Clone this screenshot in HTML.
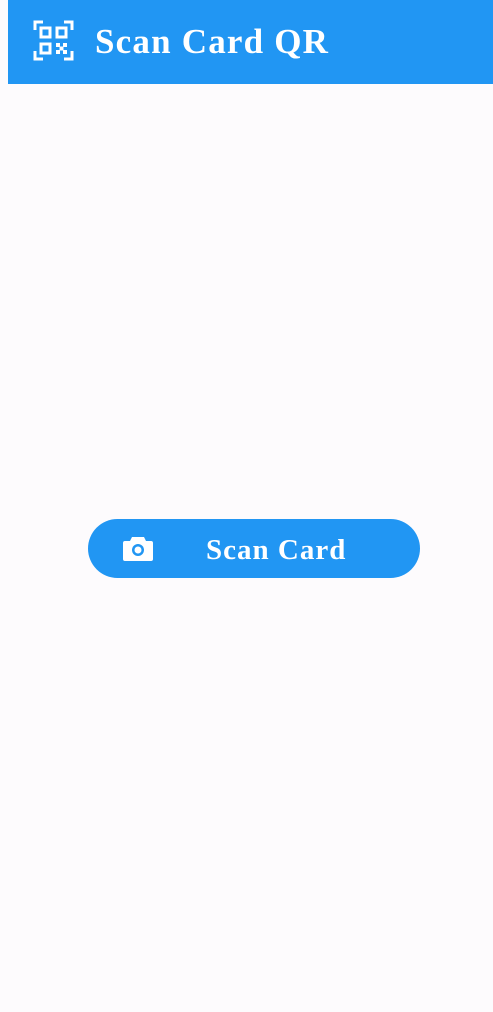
<!DOCTYPE html>
<html><head><style>
html,body{margin:0;padding:0;width:493px;height:1012px;background:#fdfbfd;overflow:hidden}
.hdr{position:absolute;left:8px;top:0;width:485px;height:84px;background:#2196f3}
.t{position:absolute;left:95px;top:22px;font:bold 35px "Liberation Serif",serif;color:#fff;letter-spacing:1.2px}
.btn{position:absolute;left:88px;top:519px;width:332px;height:59px;border-radius:30px;background:#2196f3}
.bt{position:absolute;left:206px;top:534px;font:bold 29px "Liberation Serif",serif;color:#fff;letter-spacing:1px}
</style></head><body>
<div class="hdr"></div>
<svg style="position:absolute;left:33px;top:20px" width="41" height="41" viewBox="0 0 41 41" fill="none" stroke="#fff" stroke-width="3">
<path d="M2 10V2h8M31 2h8v8M39 31v8h-8M10 39H2v-8"/>
<rect x="8" y="8" width="9" height="9"/><rect x="24" y="8" width="9" height="9"/><rect x="8" y="24" width="9" height="9"/>
<g fill="#fff" stroke="none"><rect x="23" y="23" width="4" height="4"/><rect x="30" y="23" width="4" height="4"/><rect x="26.5" y="26.5" width="4" height="4"/><rect x="23" y="30" width="4" height="4"/><rect x="30" y="30" width="4" height="4"/></g>
</svg>
<div class="t">Scan Card QR</div>
<div class="btn"></div>
<svg style="position:absolute;left:123px;top:536px" width="30" height="25" viewBox="0 0 30 25">
<path fill="#fff" d="M9 1h12l2 4h5a2 2 0 0 1 2 2v16a2 2 0 0 1-2 2H2a2 2 0 0 1-2-2V7a2 2 0 0 1 2-2h5z"/>
<circle cx="15" cy="14" r="6" fill="#2196f3"/><circle cx="15" cy="14" r="3.5" fill="#fff"/>
</svg>
<div class="bt">Scan Card</div>
</body></html>
